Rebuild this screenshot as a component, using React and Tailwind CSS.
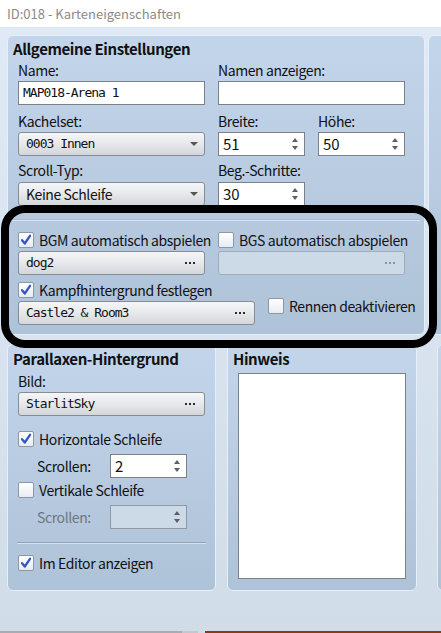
import React from 'react';

const ui = "font-['Noto_Sans_CJK_JP','Noto_Sans',sans-serif]";
const mono = "font-['DejaVu_Sans_Mono','Liberation_Mono',monospace]";

const Label = ({ children, className = '' }) => (
  <div className={`h-[16px] leading-[16px] text-[14px] tracking-[-0.4px] text-[#111] whitespace-nowrap ${className}`}>{children}</div>
);

const TextBox = ({ value = '', className = '' }) => (
  <div className={`h-[24px] bg-white border border-[#7d8187] pl-[4px] flex items-center text-[13px] tracking-[-1px] text-[#111] ${mono} ${className}`}>
    {value}
  </div>
);

const Dots = ({ dim }) => (
  <span className="flex gap-[2px] items-center">
    {[0, 1, 2].map((i) => (
      <span key={i} className={`w-[2px] h-[2px] ${dim ? 'bg-[#8b939c]' : 'bg-[#2b2b2b]'}`} />
    ))}
  </span>
);

// gradient push button used for pickers and combos
const PickButton = ({ value, monoText = true, arrow = false, disabled = false, className = '' }) => (
  <div
    className={`h-[24px] rounded-[3px] border flex items-center justify-between pl-[7px] ${arrow ? 'pr-[6px]' : 'pr-[9px]'} ${
      disabled
        ? 'border-[#a3adb8] bg-[#ccd9e6]'
        : 'border-[#878c93] bg-gradient-to-b from-[#f5f6f7] via-[#e6e8eb] to-[#d3d6da]'
    } ${className}`}
  >
    <span
      className={`text-[#111] whitespace-nowrap ${
        monoText ? `text-[13px] tracking-[-1px] ${mono}` : 'text-[14px] tracking-[-0.4px]'
      }`}
    >
      {value}
    </span>
    {arrow ? (
      <span className="w-0 h-0 border-l-[4px] border-r-[4px] border-t-[4px] border-l-transparent border-r-transparent border-t-[#555]" />
    ) : (
      <Dots dim={disabled} />
    )}
  </div>
);

const Spin = ({ value, disabled = false, className = '' }) => (
  <div
    className={`h-[24px] border flex items-center justify-between pl-[4px] pr-[6px] ${
      disabled ? 'bg-[#ccd9e6] border-[#8f98a3]' : 'bg-white border-[#7d8187]'
    } ${className}`}
  >
    <span className="text-[15px] text-[#111]">{value}</span>
    <span className="flex flex-col gap-[4px] items-center">
      <span className="w-0 h-0 border-l-[3.5px] border-r-[3.5px] border-b-[4px] border-l-transparent border-r-transparent border-b-[#5a5f66]" />
      <span className="w-0 h-0 border-l-[3.5px] border-r-[3.5px] border-t-[4px] border-l-transparent border-r-transparent border-t-[#5a5f66]" />
    </span>
  </div>
);

const Check = ({ on, children, className = '' }) => (
  <div className={`flex items-center gap-[5px] h-[16px] ${className}`}>
    <span className="relative w-[16px] h-[16px] shrink-0 rounded-[2px] border border-[#8c98a5] bg-gradient-to-b from-white to-[#e8ecf1]">
      {on && (
        <svg viewBox="0 0 16 16" className="absolute inset-0 w-full h-full">
          <path d="M3.5 8.2 L6.6 12 L12.6 3.2" fill="none" stroke="#3556c0" strokeWidth="2.6" strokeLinecap="round" strokeLinejoin="round" />
        </svg>
      )}
    </span>
    <span className="text-[14px] tracking-[-0.4px] text-[#111] leading-[16px] whitespace-nowrap">{children}</span>
  </div>
);

const Panel = ({ className = '', children }) => (
  <div className={`rounded-[6px] border border-[#e6eef7] bg-gradient-to-b from-[#c3d5ea] to-[#aec2d8] ${className}`}>
    {children}
  </div>
);

const Title = ({ children }) => (
  <div className="h-[18px] leading-[18px] text-[15px] tracking-[-0.4px] font-bold text-[#111] pl-[5px] whitespace-nowrap">{children}</div>
);

export default function App() {
  return (
    <div className={`w-[441px] h-[633px] overflow-hidden flex flex-col bg-white ${ui}`}>
      <div className="h-[27px] shrink-0 flex items-center pl-[7px] text-[13px] text-[#8a8a8a]">
        ID:018 - Karteneigenschaften
      </div>

      <div className="relative flex-1 flex flex-col bg-gradient-to-b from-[#e0eaf7] to-[#d0dce8] pl-[7px] pt-[8px]">
        {/* upper row: general settings */}
        <div className="flex gap-[3px]">
          <Panel className="w-[418px] h-[300px] shrink-0 pt-[4px]">
            <Title>Allgemeine Einstellungen</Title>
            <div className="pl-[10px]">
              <div className="flex gap-[13px] mt-[4px]">
                <div className="w-[187px]">
                  <Label>Name:</Label>
                  <TextBox value="MAP018-Arena 1" className="mt-[3px]" />
                </div>
                <div className="w-[187px]">
                  <Label>Namen anzeigen:</Label>
                  <TextBox className="mt-[3px]" />
                </div>
              </div>

              <div className="flex gap-[13px] mt-[8px]">
                <div className="w-[187px]">
                  <Label>Kachelset:</Label>
                  <PickButton value="0003 Innen" arrow className="mt-[3px]" />
                </div>
                <div className="w-[87px]">
                  <Label>Breite:</Label>
                  <Spin value="51" className="mt-[3px]" />
                </div>
                <div className="w-[87px]">
                  <Label>Höhe:</Label>
                  <Spin value="50" className="mt-[3px]" />
                </div>
              </div>

              <div className="flex gap-[13px] mt-[6px]">
                <div className="w-[187px]">
                  <Label>Scroll-Typ:</Label>
                  <PickButton value="Keine Schleife" monoText={false} arrow className="mt-[4px]" />
                </div>
                <div className="w-[87px]">
                  <Label>Beg.-Schritte:</Label>
                  <Spin value="30" className="mt-[4px]" />
                </div>
              </div>
            </div>

            <div className="mx-[4px] mt-[13px] border-t border-[#a9bdd3] border-b border-b-[#d8e4f0]" />

            <div className="pl-[10px]">
              <div className="flex gap-[13px] mt-[11px]">
                <div className="w-[187px]">
                  <Check on>BGM automatisch abspielen</Check>
                  <PickButton value="dog2" className="mt-[3px]" />
                </div>
                <div className="w-[187px]">
                  <Check>BGS automatisch abspielen</Check>
                  <PickButton value="" disabled className="mt-[3px]" />
                </div>
              </div>

              <div className="flex items-center gap-[13px] mt-[7px]">
                <div className="w-[237px]">
                  <Check on>Kampfhintergrund festlegen</Check>
                  <PickButton value="Castle2 & Room3" className="mt-[3px]" />
                </div>
                <Check className="mt-[4px]">Rennen deaktivieren</Check>
              </div>
            </div>
          </Panel>
          <Panel className="w-[40px] h-[300px] shrink-0" />
        </div>

        {/* lower row: parallax and note */}
        <div className="flex mt-[9px]">
          <Panel className="w-[209px] h-[247px] shrink-0 pt-[5px]">
            <Title>Parallaxen-Hintergrund</Title>
            <div className="pl-[10px] pr-[10px]">
              <Label className="mt-[5px]">Bild:</Label>
              <PickButton value="StarlitSky" className="mt-[3px] w-[187px]" />
              <Check on className="mt-[15px]">Horizontale Schleife</Check>
              <div className="flex items-center mt-[7px] pl-[19px]">
                <span className="w-[73px] text-[14px] tracking-[-0.4px] text-[#111]">Scrollen:</span>
                <Spin value="2" className="w-[77px]" />
              </div>
              <Check className="mt-[4px]">Vertikale Schleife</Check>
              <div className="flex items-center mt-[7px] pl-[19px]">
                <span className="w-[73px] text-[14px] tracking-[-0.4px] text-[#6d7682]">Scrollen:</span>
                <Spin value="" disabled className="w-[77px]" />
              </div>
              <div className="mt-[13px] border-t border-[#8fa3ba] border-b border-b-[#d6e2ee] -mx-[1px]" />
              <Check on className="mt-[11px]">Im Editor anzeigen</Check>
            </div>
          </Panel>

          <Panel className="w-[190px] h-[247px] shrink-0 ml-[11px] pt-[5px]">
            <Title>Hinweis</Title>
            <div className="ml-[10px] mt-[5px] w-[168px] h-[206px] bg-white border border-[#7d8187]" />
          </Panel>

          <Panel className="w-[40px] h-[247px] shrink-0 ml-[20px]" />
        </div>

        <div className="flex-1" />
        <div className="h-[2px] -ml-[7px] flex">
          <div className="w-[182px] bg-[#a9adb1]" />
          <div className="w-[16px] bg-[#c4c8cc]" />
          <div className="w-[7px] bg-[#d0dce8]" />
          <div className="flex-1 bg-[#8a3b14]" />
        </div>

        {/* black highlight frame over the audio rows */}
        <div className="absolute left-[1px] top-[178px] w-[436px] h-[143px] border-[8px] border-black rounded-[24px] pointer-events-none" />
      </div>
    </div>
  );
}
